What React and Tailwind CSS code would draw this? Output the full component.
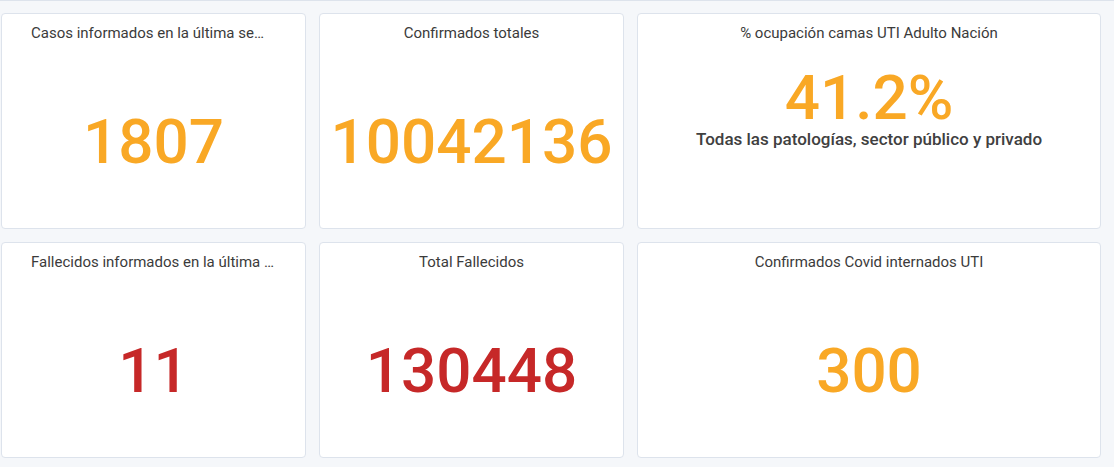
export default function App() {
  const font = { fontFamily: 'Roboto, "Liberation Sans", sans-serif' };
  const Card = ({ title, value, color, sub }) => (
    <div className="bg-white border border-[#dde3ec] rounded-[4px] h-[216px] flex flex-col items-center overflow-hidden">
      <div className="w-full px-[29px] pt-[9px] h-[31px] text-[15px] leading-[20px] text-[#3b3b3b] text-center truncate">
        {title}
      </div>
      {sub ? (
        <>
          <div className={`mt-[22px] text-[62px] leading-[62px] font-medium ${color}`}>{value}</div>
          <div className="text-[17px] leading-[20px] font-medium text-[#404040]">{sub}</div>
        </>
      ) : (
        <div className={`mt-[66px] text-[62px] leading-[62px] font-medium ${color}`}>{value}</div>
      )}
    </div>
  );
  return (
    <div style={font} className="w-[1114px] h-[467px] bg-[#f5f7fa] border-t border-[#dde3ec] pl-[1px] pr-[13px] pt-[12px]">
      <div className="grid grid-cols-[305px_305px_1fr] gap-[13px]">
        <Card title="Casos informados en la última semana" value="1807" color="text-[#f9a825]" />
        <Card title="Confirmados totales" value="10042136" color="text-[#f9a825]" />
        <Card title="% ocupación camas UTI Adulto Nación" value="41.2%" color="text-[#f9a825]" sub="Todas las patologías, sector público y privado" />
        <Card title="Fallecidos informados en la última semana" value="11" color="text-[#c62828]" />
        <Card title="Total Fallecidos" value="130448" color="text-[#c62828]" />
        <Card title="Confirmados Covid internados UTI" value="300" color="text-[#f9a825]" />
      </div>
    </div>
  );
}
